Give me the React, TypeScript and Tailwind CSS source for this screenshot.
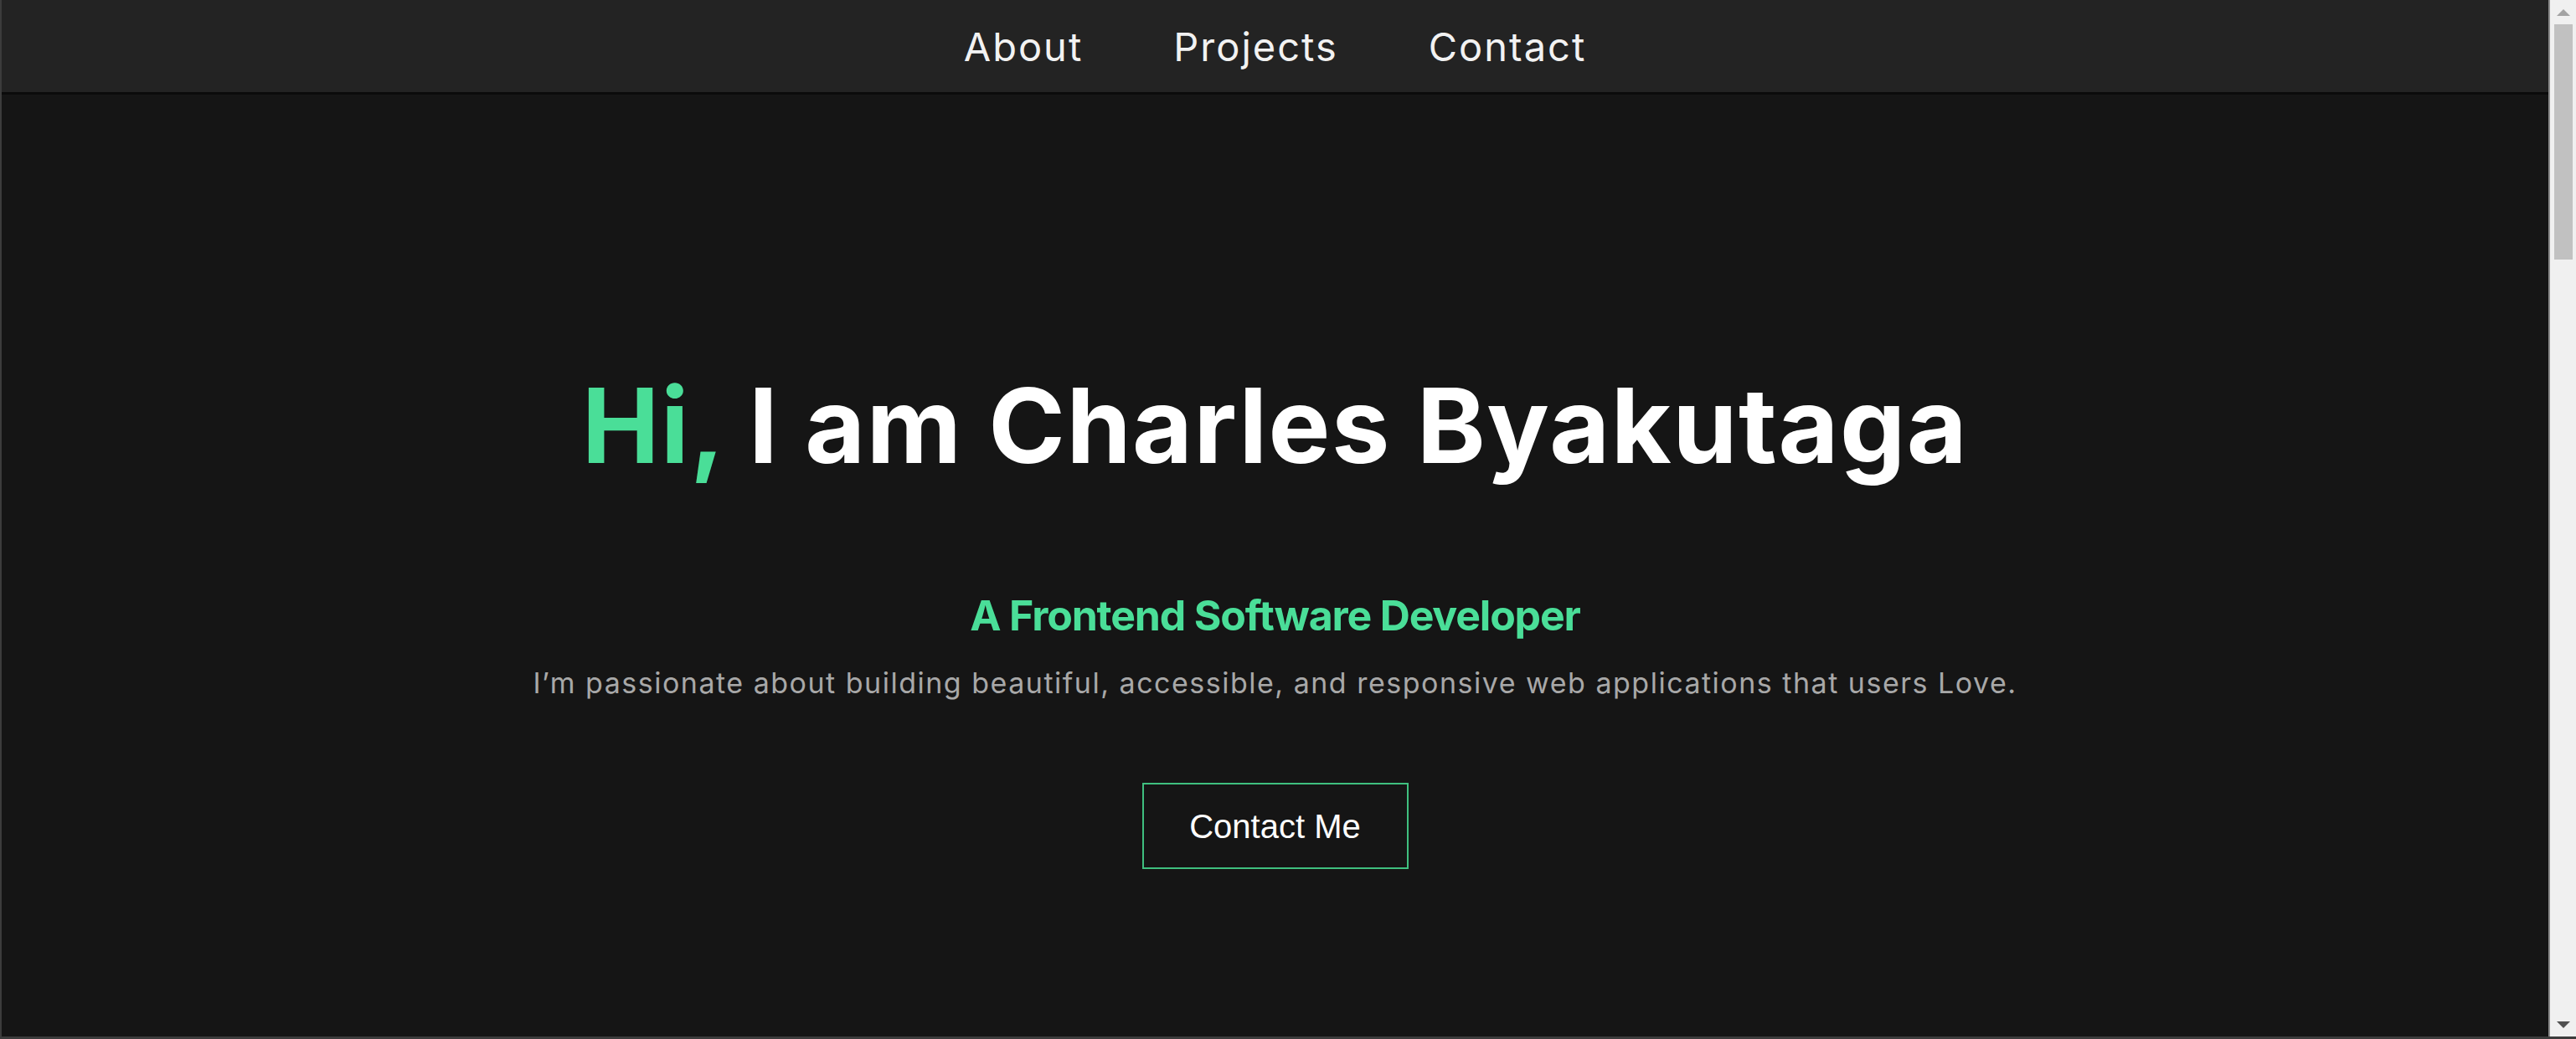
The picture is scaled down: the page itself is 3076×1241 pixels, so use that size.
import React from 'react';

const navLinks = ['About', 'Projects', 'Contact'];

function Scrollbar() {
  return (
    <div className="w-[33px] shrink-0 bg-[#f0f0f0] border-l-2 border-[#8c8c8c] flex flex-col items-center">
      <div className="h-[29px] flex items-center justify-center">
        <div className="w-0 h-0 border-l-[8px] border-r-[8px] border-b-[8px] border-l-transparent border-r-transparent border-b-[#a3a3a3]" />
      </div>
      <div className="w-[22px] h-[281px] bg-[#c1c1c1]" />
      <div className="flex-1" />
      <div className="h-[29px] flex items-center justify-center">
        <div className="w-0 h-0 border-l-[8px] border-r-[8px] border-t-[8px] border-l-transparent border-r-transparent border-t-[#505050]" />
      </div>
    </div>
  );
}

function App() {
  return (
    <div className="h-[1241px] w-full flex bg-[#3c3c3c] pl-[2px] pb-[3px] overflow-hidden">
      <div className="flex-1 flex flex-col bg-[#151515] font-['Inter',sans-serif]">
        <nav className="h-[113px] shrink-0 bg-[#232323] border-b-[3px] border-[#0b0b0b] flex items-center justify-center gap-[108px]">
          {navLinks.map((link) => (
            <a key={link} href="#" className="text-[47px] tracking-[2px] text-[#f2f2f2] leading-none">
              {link}
            </a>
          ))}
        </nav>

        <main className="flex flex-col items-center pt-[333px]">
          <h1 className="text-[124px] font-bold leading-none tracking-[1.5px] text-white">
            <span className="text-[#4ade98]">Hi,</span> I am Charles Byakutaga
          </h1>
          <h2 className="mt-[140px] text-[50px] font-bold leading-none tracking-[-1.2px] text-[#4ade98]">
            A Frontend Software Developer
          </h2>
          <p className="mt-[39px] text-[34px] leading-none tracking-[1.5px] text-[#a8a8a8]">
            I’m passionate about building beautiful, accessible, and responsive web applications that users Love.
          </p>
          <button className="mt-[102px] w-[318px] h-[103px] border-2 border-[#3fbf7f] flex items-center justify-center font-['Liberation_Sans',Arial,sans-serif] text-[40px] text-white">
            Contact Me
          </button>
        </main>
      </div>
      <Scrollbar />
    </div>
  );
}

export default App;
